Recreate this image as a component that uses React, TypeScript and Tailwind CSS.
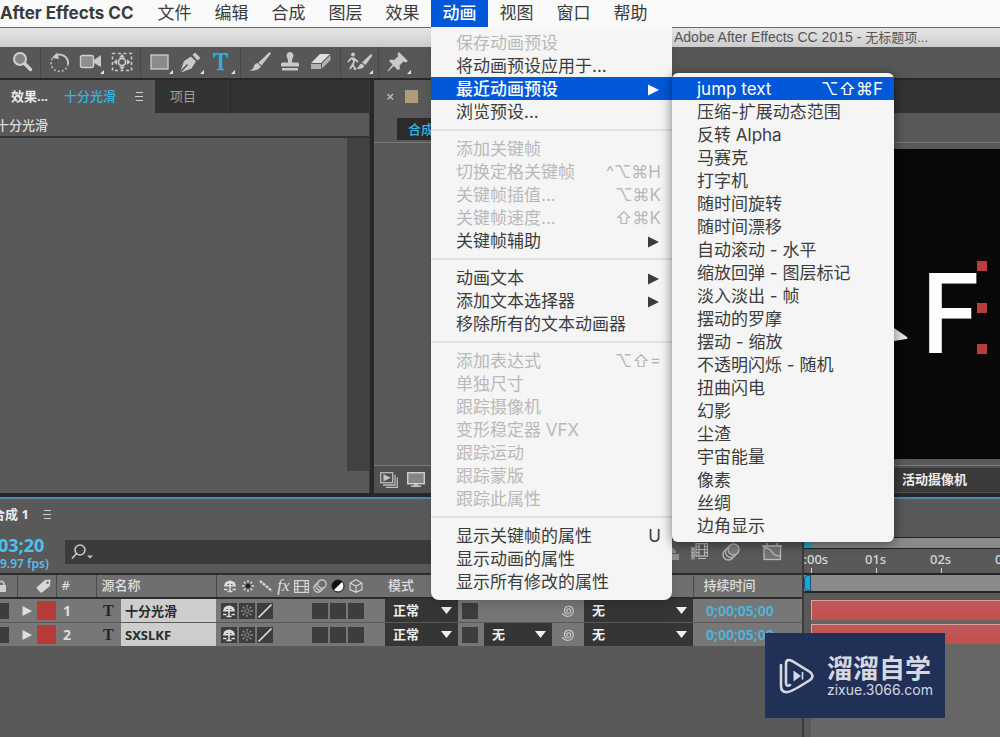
import React from "react";
import clsx from "clsx";

type MenuEntry = {
  label?: string;
  keys?: string;
  disabled?: boolean;
  sub?: boolean;
  active?: boolean;
  separator?: boolean;
};

const menuTitles = ["文件", "编辑", "合成", "图层", "效果", "动画", "视图", "窗口", "帮助"];

const animationMenu: MenuEntry[] = [
  { label: "保存动画预设", disabled: true },
  { label: "将动画预设应用于..." },
  { label: "最近动画预设", sub: true, active: true },
  { label: "浏览预设..." },
  { separator: true },
  { label: "添加关键帧", disabled: true },
  { label: "切换定格关键帧", keys: "^⌥⌘H", disabled: true },
  { label: "关键帧插值...", keys: "⌥⌘K", disabled: true },
  { label: "关键帧速度...", keys: "⇧⌘K", disabled: true },
  { label: "关键帧辅助", sub: true },
  { separator: true },
  { label: "动画文本", sub: true },
  { label: "添加文本选择器", sub: true },
  { label: "移除所有的文本动画器" },
  { separator: true },
  { label: "添加表达式", keys: "⌥⇧=", disabled: true },
  { label: "单独尺寸", disabled: true },
  { label: "跟踪摄像机", disabled: true },
  { label: "变形稳定器 VFX", disabled: true },
  { label: "跟踪运动", disabled: true },
  { label: "跟踪蒙版", disabled: true },
  { label: "跟踪此属性", disabled: true },
  { separator: true },
  { label: "显示关键帧的属性", keys: "U" },
  { label: "显示动画的属性" },
  { label: "显示所有修改的属性" },
];

const recentPresets: MenuEntry[] = [
  { label: "jump text", keys: "⌥⇧⌘F", active: true },
  { label: "压缩-扩展动态范围" },
  { label: "反转 Alpha" },
  { label: "马赛克" },
  { label: "打字机" },
  { label: "随时间旋转" },
  { label: "随时间漂移" },
  { label: "自动滚动 - 水平" },
  { label: "缩放回弹 - 图层标记" },
  { label: "淡入淡出 - 帧" },
  { label: "摆动的罗摩" },
  { label: "摆动 - 缩放" },
  { label: "不透明闪烁 - 随机" },
  { label: "扭曲闪电" },
  { label: "幻影" },
  { label: "尘渣" },
  { label: "宇宙能量" },
  { label: "像素" },
  { label: "丝绸" },
  { label: "边角显示" },
];

const layers = [
  { id: 1, name: "十分光滑", matte: false },
  { id: 2, name: "SXSLKF", matte: true },
];

const MenuList = ({ entries }: { entries: MenuEntry[] }) => (
  <ul className="pt-1 pb-[5px]">
    {entries.map((e, i) =>
      e.separator ? (
        <li key={i} className="h-[14px] flex items-center">
          <span className="h-[2px] w-full bg-[#e0e0e0]" />
        </li>
      ) : (
        <li key={i}>
          <button
            disabled={e.disabled}
            className={clsx(
              "w-full h-[23px] pl-[25px] pr-[11px] pt-[2px] flex items-center justify-between text-[17px] leading-[21px] whitespace-nowrap",
              e.active ? "bg-[#0058d8] text-white" : e.disabled ? "text-[#b9b9b9]" : "text-[#3c3c3c]",
              e.active && e.sub && "font-medium"
            )}
          >
            <span>{e.label}</span>
            {e.keys && <span className="font-normal">{e.keys}</span>}
            {e.sub && (
              <svg width="12" height="12" viewBox="0 0 12 12" fill="currentColor" className="mr-[2px]">
                <path d="M1 0.5L12 6L1 11.5Z" />
              </svg>
            )}
          </button>
        </li>
      )
    )}
  </ul>
);

/* ---------- toolbar ---------- */

const Tool = ({ label, more, children }: { label: string; more?: boolean; children: React.ReactNode }) => (
  <button aria-label={label} className="w-[31px] h-full flex items-center justify-center">
    <svg width="28" height="26" viewBox="0 0 28 26" fill="#c9c9c9" stroke="none">
      {children}
      {more && <path d="M27 20V24H23Z" fill="#e6e6e6" />}
    </svg>
  </button>
);

const ToolGroup = ({ children }: { children: React.ReactNode }) => (
  <div className="h-full px-[3px] flex items-center border-l border-[#484848]">{children}</div>
);

const Toolbar = () => (
  <div className="h-[33px] bg-[#575757] border-b-2 border-[#282828] flex items-center">
    <div className="w-10 h-full pl-[7px] flex items-center">
      <Tool label="缩放工具">
        <circle cx="11" cy="9" r="6" fill="#858585" stroke="#d0d0d0" strokeWidth="2" />
        <path d="M15.5 13.5L21.5 19.5" stroke="#d0d0d0" strokeWidth="3.5" strokeLinecap="round" />
      </Tool>
    </div>
    <ToolGroup>
      <Tool label="旋转工具">
        <path d="M9 6A8.5 8.5 0 0 1 22 14" fill="none" stroke="#c9c9c9" strokeWidth="2" />
        <path d="M22 14A8.5 8.5 0 1 1 8 6.5" fill="none" stroke="#bdbdbd" strokeWidth="1.6" strokeDasharray="2 2" />
        <path d="M6 8L11 2.5L13 9Z" />
      </Tool>
      <Tool label="摄像机工具" more>
        <rect x="3.5" y="5.5" width="13" height="12" rx="2" fill="#8f8f8f" stroke="#cfcfcf" strokeWidth="1.4" />
        <path d="M17 10L24 5V17L17 13Z" />
      </Tool>
      <Tool label="锚点工具">
        <rect x="4.5" y="3.5" width="19" height="17" fill="none" stroke="#c9c9c9" strokeWidth="1.6" strokeDasharray="3 2.5" />
        <circle cx="14" cy="12" r="3.6" fill="none" stroke="#d4d4d4" strokeWidth="1.6" />
        <path d="M14 4L17 7.5H11ZM14 20L17 16.5H11ZM5.5 12L9 9V15ZM22.5 12L19 9V15Z" />
      </Tool>
    </ToolGroup>
    <ToolGroup>
      <Tool label="矩形工具" more>
        <rect x="5" y="5" width="17" height="14" fill="#8b8b8b" stroke="#cecece" strokeWidth="1.3" />
      </Tool>
      <Tool label="钢笔工具" more>
        <path d="M3 22L7 11L14 6.5L19 11.5L14.5 18.5L4 22.5L11 15L10 14L3 21Z" />
        <path d="M15.5 5L18 2.5L23.5 8L20.5 10.5Z" />
      </Tool>
      <Tool label="文字工具" more>
        <path d="M5 3H20V8H18.8Q18.3 4.8 15.5 4.8H14.2V17.5Q14.2 19 16.3 19.2V20.3H8.7V19.2Q10.8 19 10.8 17.5V4.8H9.5Q6.7 4.8 6.2 8H5Z" fill="#36a9d6" />
      </Tool>
    </ToolGroup>
    <ToolGroup>
      <Tool label="画笔工具">
        <path d="M23.5 2L25 3.5L15.5 15.5L12.3 12.7Z" />
        <path d="M11.5 13L15 16.5Q12 21.5 3.5 20.5Q7.5 19.5 8 16Q9 13.2 11.5 13Z" />
      </Tool>
      <Tool label="仿制图章工具">
        <path d="M13 2A3.6 3.6 0 0 1 16 7.5Q14.8 9.5 15 12.5H20.5Q22 12.5 22 14V16.5H4V14Q4 12.5 5.5 12.5H11Q11.2 9.5 10 7.5A3.6 3.6 0 0 1 13 2Z" />
        <rect x="5" y="18" width="16" height="2.5" />
      </Tool>
      <Tool label="橡皮擦工具">
        <path d="M3 13L12 4H22L13 13Z" fill="#dedede" />
        <path d="M3 14H13V19H3ZM14 13.5L22.5 5V10L14 18.5Z" fill="#b2b2b2" />
      </Tool>
    </ToolGroup>
    <ToolGroup>
      <Tool label="Roto 笔刷工具" more>
        <circle cx="7" cy="4.5" r="2" />
        <path d="M6 8L8 11L7 15L9.5 20M7 14L4 19M2 12L5 8.5H8L12 12" fill="none" stroke="#c9c9c9" strokeWidth="1.8" />
        <path d="M25 4L26.500 5.500L19.500 15L16 12.500ZM15.500 13.500L18.500 16Q16 20 9 18.500Q13 17.500 13.500 15Q14.500 13.500 15.500 13.500Z" />
      </Tool>
    </ToolGroup>
    <ToolGroup>
      <Tool label="操控点工具" more>
        <path d="M15 2L24 11L21.5 12.5L19.5 11.5L15.5 15.5L16 19L13.5 20L10 16L4 21.5L3.5 21L8.5 14.5L5 11L6.5 9.5L10 10L14 6.5L13.5 4Z" />
      </Tool>
    </ToolGroup>
  </div>
);

const Burger = () => (
  <svg width="9" height="11" viewBox="0 0 9 11" stroke="#d0d0d0" strokeWidth="1">
    <path d="M1 1.5H8M0 5.5H8M1 9.5H8" />
  </svg>
);

/* ---------- panels ---------- */

const EffectControls = () => (
  <section className="w-[370px] shrink-0 flex flex-col border-r border-[#3a3a3a]">
    <div className="h-[33px] flex bg-[#333333] text-[13px]">
      <div className="w-[155px] pl-[11px] flex items-center bg-[#595959] font-bold text-[#ececec]">
        <span className="w-[53px]">效果...</span>
        <span className="w-[71px] font-medium text-[#36b3e3]">十分光滑</span>
        <Burger />
      </div>
      <button className="w-[76px] pl-[15px] text-left text-[#a0a0a0] border-r border-[#272727]">项目</button>
    </div>
    <div className="h-[25px] pt-[2px] flex items-center border-b-2 border-[#333333] overflow-hidden text-[13px] font-medium text-[#dcdcdc]">
      <span className="-ml-1">十分光滑</span>
    </div>
    <div className="flex-1 flex justify-end pb-[22px]">
      <div className="w-[22px] bg-[#424242]" />
    </div>
  </section>
);

const Composition = () => (
  <section className="flex-1 min-w-0 flex flex-col">
    <div className="h-[33px] flex items-center bg-[#333333]">
      <div className="h-full w-[300px] pl-3 flex items-center gap-[10px] bg-[#595959]">
        <button aria-label="关闭" className="w-[9px] h-[9px]">
          <svg width="9" height="9" viewBox="0 0 9 9" stroke="#c4c4c4" strokeWidth="1.2">
            <path d="M1.5 2L7 7.5M7 2L1.5 7.5" />
          </svg>
        </button>
        <span className="w-[13px] h-[13px] bg-[#b09c78]" />
      </div>
    </div>
    <div className="h-[30px] pl-[23px] pt-[3px] border-b border-[#7b7b7b]">
      <button className="h-[22px] px-[11px] bg-[#2c2c2c] text-[13px] leading-4 font-medium text-[#36b3e3]">合成 1</button>
    </div>
    <div className="flex-1 flex pt-[6px] pb-[6px] border-b border-[#7b7b7b]">
      <div className="w-[120px] shrink-0" />
      <div className="relative flex-1 bg-[#080808] overflow-hidden">
        <span className="absolute right-[20px] top-[92px] font-['Noto_Sans_CJK_SC'] font-medium text-[108px] leading-[130px] text-white">F</span>
        <svg className="absolute right-[92px] top-[179px]" width="14" height="14" viewBox="0 0 14 14" fill="#e6e6e6">
          <path d="M0 0L13 9Q14 11 12 11L0 13Z" />
        </svg>
        <span className="absolute right-[13px] top-[112px] w-[10px] h-[10px] bg-[#b93d3d]" />
        <span className="absolute right-[13px] top-[154px] w-[10px] h-[10px] bg-[#b93d3d]" />
        <span className="absolute right-[13px] top-[195px] w-[10px] h-[10px] bg-[#b93d3d]" />
      </div>
    </div>
    <div className="h-[27px] pl-[6px] flex items-center gap-[9px] bg-[#505050]">
      <svg width="18" height="16" viewBox="0 0 18 16" fill="none" stroke="#bcbcbc" strokeWidth="1.3">
        <rect x="0.7" y="0.7" width="12" height="10" />
        <path d="M4 3L9.5 5.7L4 8.5Z" fill="#d0d0d0" />
        <path d="M15 3V13H3M17.3 5.5V15.3H6" />
      </svg>
      <svg width="18" height="15" viewBox="0 0 18 15">
        <rect x="0.7" y="0.7" width="16.6" height="11" fill="#858585" stroke="#cfcfcf" strokeWidth="1.4" />
        <path d="M7 12H11V13.5H14V15H4V13.5H7Z" fill="#c4c4c4" />
      </svg>
      <span className="h-6 flex-1 ml-1 flex items-center justify-end bg-[#3a3a3a] pr-[33px] text-[13px] font-bold text-[#eeeeee]">活动摄像机</span>
    </div>
  </section>
);

/* ---------- timeline icons ---------- */

const Shy = () => (
  <svg width="16" height="14" viewBox="0 0 16 14">
    <path d="M2 7.5A6 6 0 0 1 14 7.5Z" fill="#dcdcdc" />
    <path d="M8 6V12.5M2 10.5H5.5M10.5 10.5H14M5.5 12.5H10.5" stroke="#dcdcdc" strokeWidth="1.5" fill="none" />
    <path d="M5.5 5.5H7M9 5.5H10.5" stroke="#555" strokeWidth="1" />
  </svg>
);

const Sun = ({ dim }: { dim?: boolean }) => (
  <svg width="16" height="16" viewBox="0 0 16 16" stroke={dim ? "#8d8d8d" : "#dcdcdc"} strokeWidth="1.3" fill="none">
    <path d="M8 2V4.5M8 11.5V14M2 8H4.5M11.5 8H14M3.8 3.8L5.5 5.5M10.5 10.5L12.2 12.2M3.8 12.2L5.5 10.5M10.5 5.5L12.2 3.8" />
    <circle cx="8" cy="8" r="2" fill={dim ? "none" : "#222"} stroke={dim ? "#8d8d8d" : "#222"} strokeWidth="1" />
  </svg>
);

const Slash = () => (
  <svg width="16" height="16" viewBox="0 0 16 16" stroke="#e4e4e4" strokeWidth="1.6">
    <path d="M1.5 14.5L14.5 1.5" />
  </svg>
);

const Film = () => (
  <svg width="15" height="13" viewBox="0 0 15 13" fill="none" stroke="#d4d4d4" strokeWidth="1.2">
    <rect x="0.6" y="0.6" width="13.8" height="11.8" />
    <path d="M3.8 0.5V12.5M11.2 0.5V12.5M3.8 6.5H11.2M0.5 3.5H3.8M0.5 6.5H3.8M0.5 9.5H3.8M11.2 3.5H14.5M11.2 6.5H14.5M11.2 9.5H14.5" />
  </svg>
);

const Blur = () => (
  <svg width="14" height="14" viewBox="0 0 14 14" fill="none" stroke="#cdcdcd" strokeWidth="1.2">
    <circle cx="5" cy="9" r="4.2" />
    <circle cx="7" cy="7" r="4.2" fill="#6f6f6f" />
    <circle cx="9" cy="5" r="4.2" fill="#6f6f6f" />
  </svg>
);

const headerSwitches = [
  <Shy />,
  <Sun />,
  <svg width="14" height="14" viewBox="0 0 14 14" stroke="#dcdcdc" strokeWidth="2.2">
    <path d="M1 2L13 12" strokeDasharray="2.8 1" />
  </svg>,
  <i className="font-['Liberation_Serif'] font-normal text-[17px] leading-4 text-[#dcdcdc]">fx</i>,
  <Film />,
  <Blur />,
  <svg width="14" height="14" viewBox="0 0 14 14">
    <circle cx="7" cy="7" r="6" fill="#fff" stroke="#111" />
    <path d="M2.7 11.3A6 6 0 0 1 11.3 2.7Z" fill="#111" />
  </svg>,
  <svg width="14" height="14" viewBox="0 0 14 14" fill="none" stroke="#d4d4d4" strokeWidth="1.2">
    <path d="M7 0.8L13 4V10.5L7 13.3L1 10.5V4ZM1 4L7 7L13 4M7 7V13" />
  </svg>,
];

const Box = ({ children }: { children?: React.ReactNode }) => (
  <span className="w-4 h-4 shrink-0 bg-[#3d3d3d] flex items-center justify-center">{children}</span>
);

const Dropdown = ({ label, value }: { label: string; value: string }) => (
  <div className="relative h-[23px] bg-[#353535]">
    <select
      aria-label={label}
      defaultValue={value}
      className="appearance-none block w-full h-full pl-2 text-[13px] font-bold text-[#eeeeee] bg-transparent"
    >
      <option>{value}</option>
    </select>
    <svg className="absolute right-[6px] top-2 pointer-events-none" width="11" height="7" viewBox="0 0 11 7" fill="#f0f0f0">
      <path d="M0 0H11L5.5 7Z" />
    </svg>
  </div>
);

const LayerTable = () => (
  <table className="w-full table-fixed border-collapse text-[13px] text-[#dedede]">
    <colgroup>
      <col className="w-[17px]" />
      <col className="w-[39px]" />
      <col className="w-[40px]" />
      <col className="w-[120px]" />
      <col className="w-[169px]" />
      <col className="w-[73px]" />
      <col className="w-[26px]" />
      <col className="w-[68px]" />
      <col className="w-[32px]" />
      <col className="w-[109px]" />
      <col className="w-[109px]" />
    </colgroup>
    <thead>
      <tr className="h-[24px] bg-[#6f6f6f] border-t-2 border-b-2 border-[#2c2c2c] text-left">
        <th className="p-0">
          <svg width="8" height="12" viewBox="0 0 8 12" fill="#d0d0d0">
            <path d="M0 5H6V12H0Z" />
            <path d="M0 1.5H2Q4 2 4 5" fill="none" stroke="#d0d0d0" strokeWidth="1.5" />
          </svg>
        </th>
        <th className="p-0 pl-[18px] border-l border-[#4b4b4b]">
          <svg width="15" height="14" viewBox="0 0 15 14">
            <path
              fillRule="evenodd"
              d="M14.5 0.5L14 7L6 13.5Q5 14 4 13L0.8 9.5Q0.3 8.5 1 8L9 1ZM11.5 2.5A1.3 1.3 0 1 0 11.5 5.1A1.3 1.3 0 0 0 11.5 2.5Z"
              fill="#d8d8d8"
            />
          </svg>
        </th>
        <th className="p-0 pl-[5px] font-medium border-l border-[#4b4b4b]">#</th>
        <th className="p-0 pl-[5px] font-medium border-l border-[#4b4b4b]">源名称</th>
        <th className="p-0 border-l border-[#4b4b4b]">
          <div className="pl-1 flex items-center">
            {headerSwitches.map((icon, i) => (
              <span key={i} className="w-[18px] flex justify-center">{icon}</span>
            ))}
          </div>
        </th>
        <th className="p-0 pl-[3px] font-medium">模式</th>
        <th className="p-0" />
        <th className="p-0" />
        <th className="p-0" />
        <th className="p-0" />
        <th className="p-0 pl-[10px] font-medium border-l border-[#4b4b4b]">持续时间</th>
      </tr>
    </thead>
    <tbody>
      {layers.map((layer) => (
        <tr key={layer.id} className="h-6 bg-[#777777] border-b border-[#595959]">
          <td className="p-0">
            <div className="w-[9px] h-4 bg-[#3d3d3d]" />
          </td>
          <td className="p-0">
            <div className="pl-[5px] flex items-center gap-[5px]">
              <svg width="10" height="10" viewBox="0 0 10 10" fill="#dedede">
                <path d="M0.5 0L10 5L0.5 10Z" />
              </svg>
              <span className="w-[19px] h-[19px] bg-[#b93a3a]" />
            </div>
          </td>
          <td className="p-0 pl-[7px] text-[14px] leading-[20px] font-bold">{layer.id}</td>
          <td className="p-0">
            <div className="h-[23px] pl-[7px] flex items-center">
              <span className="w-[18px] font-['Liberation_Serif'] text-[16px] font-bold text-[#262626]">T</span>
              <span className="flex-1 h-full pl-1 leading-[24px] bg-[#cecece] font-bold text-[#2a2a2a]">{layer.name}</span>
            </div>
          </td>
          <td className="p-0">
            <div className="pl-[5px] flex items-center gap-[2px]">
              <Box><Shy /></Box>
              <Box><Sun dim /></Box>
              <Box><Slash /></Box>
              <span className="w-[35px]" />
              <Box />
              <Box />
              <Box />
            </div>
          </td>
          <td className="p-0">
            <Dropdown label="模式" value="正常" />
          </td>
          <td className="p-0 pl-1">
            <Box />
          </td>
          <td className="p-0">{layer.matte && <Dropdown label="轨道遮罩" value="无" />}</td>
          <td className="p-0 pl-[9px]">
            <svg width="14" height="14" viewBox="0 0 14 14" fill="none" stroke="#cccccc" strokeWidth="1.2">
              <path d="M7 7.5Q5.5 7.5 5.8 6Q6.3 4.5 8 4.8Q10 5.5 9.5 7.8Q8.5 10.3 5.8 9.6Q3 8.5 3.5 5.3Q4.8 1.8 8.5 2.3Q12.5 3.5 12.3 7.5Q11.3 12.3 6.5 12.3Q3 12 1.2 9" />
            </svg>
          </td>
          <td className="p-0">
            <Dropdown label="父级" value="无" />
          </td>
          <td className="p-0 pl-[13px] text-[14px] leading-[20px] font-semibold text-[#4ab9e4]">0;00;05;00</td>
        </tr>
      ))}
    </tbody>
  </table>
);

const Timeline = () => (
  <section className="flex-1 flex flex-col border-t-2 border-[#4b88b5] bg-[#595959]">
    <div className="h-[31px] flex items-center gap-[14px] text-[13px] font-bold text-[#ececec] overflow-hidden">
      <span className="-ml-2">合成 1</span>
      <Burger />
    </div>
    <div className="flex-1 flex">
      <div className="w-[802px] shrink-0">
        <div className="h-[43px] flex items-center">
          <div className="w-[65px] shrink-0 pt-1 overflow-hidden font-bold text-[#4fc1ee]">
            <div className="text-[18px] leading-[20px]">
              <span className="-ml-[2px]">03;20</span>
            </div>
            <div className="text-[12px] leading-[18px] font-semibold">9.97 fps)</div>
          </div>
          <label className="w-[380px] h-6 pl-[6px] flex items-center bg-[#3b3b3b]">
            <svg width="22" height="16" viewBox="0 0 22 16" fill="none" stroke="#c8c8c8" strokeWidth="1.6">
              <circle cx="9" cy="6" r="5" />
              <path d="M5.5 9.5L1 14.5" />
              <path d="M16 11.5H22L19 14.5Z" fill="#c8c8c8" stroke="none" />
            </svg>
            <input type="text" aria-label="搜索" className="flex-1 h-full bg-transparent outline-none text-[13px] text-white" />
          </label>
          <div className="flex-1 pr-5 flex items-center justify-end">
            <svg className="mr-3" width="16" height="16" viewBox="0 0 16 16" fill="#8f8f8f">
              <path d="M0 10H16V16H0ZM3 9A5 5 0 0 1 13 9Z" />
            </svg>
            <svg className="mr-[14px]" width="17" height="17" viewBox="0 0 17 17" fill="none" stroke="#b8b8b8" strokeWidth="1.2">
              <rect x="5" y="0.6" width="11.4" height="12.5" />
              <path d="M8 0.5V13M13.5 0.5V13M8 6.5H13.5M5 3.5H8M5 6.5H8M5 9.5H8M13.5 3.5H16M13.5 6.5H16M13.5 9.5H16M1 4V16.5M3 4V16.5M1 6.5H3M1 9.5H3M1 12.5H3M7 15.5H15" />
            </svg>
            <svg className="mr-[22px]" width="18" height="18" viewBox="0 0 18 18" fill="#595959" stroke="#b8b8b8" strokeWidth="1.4">
              <circle cx="6.5" cy="11.5" r="5.5" />
              <circle cx="9" cy="9" r="5.5" />
              <circle cx="11.5" cy="6.5" r="5.5" fill="#7c7c7c" />
            </svg>
            <svg width="20" height="18" viewBox="0 0 20 18" fill="none" stroke="#b8b8b8" strokeWidth="1.3">
              <rect x="2" y="3" width="16.5" height="13.5" fill="#747474" />
              <path d="M0 3H20M5 0V6M15 0V3M2 5Q8 5 10 9Q12 13 18 13" />
            </svg>
          </div>
        </div>
        <LayerTable />
      </div>

      {/* time ruler and layer bars */}
      <div className="flex-1 min-w-0 flex flex-col overflow-hidden border-l-2 border-[#3c3c3c] mt-[7px]">
        <div className="h-3 flex border-y border-[#252525] bg-[#8a8a8a]">
          <span className="w-[7px] bg-[#22a5d4] rounded-l-sm" />
        </div>
        <div className="h-6 ml-[7px] flex text-[13px] leading-[20px] font-medium text-[#d6d6d6]">
          {["0:00s", "01s", "02s", "03s"].map((t, i) => (
            <div key={t} className="w-[65px] shrink-0 flex flex-col">
              <span className={clsx("h-[19px]", i === 0 ? "-ml-[15px]" : "-ml-[11px]")}>{t}</span>
              <span className="w-px h-[5px] bg-[#d6d6d6]" />
            </div>
          ))}
        </div>
        <div className="h-5 flex border-y-2 border-[#252525] bg-[#8a8a8a]">
          <span className="w-[7px] bg-[#22a5d4] border border-[#0d5a78] rounded-l-sm" />
        </div>
        <div className="flex-1 pt-[7px] pl-[7px]">
          <div className="h-full flex flex-col gap-1 bg-[#666666]">
            {layers.map((layer) => (
              <div key={layer.id} className="h-5 bg-linear-to-b from-[#bd5a5a] to-[#c34e4e] border-t border-l border-[#dda0a0]" />
            ))}
          </div>
        </div>
      </div>
    </div>
  </section>
);

const Watermark = () => (
  <div className="absolute left-[765px] top-[633px] w-[180px] h-[85px] pl-[14px] flex items-center gap-3 bg-[#213056] text-[#d5d8e2]">
    <svg width="36" height="36" viewBox="0 0 36 36" fill="none" stroke="currentColor" strokeWidth="2.6" strokeLinecap="round">
      <path d="M2 7V28Q2 35 9 34Q14 33 31 22Q36 18 31 14L13 3Q7 0 7 6V25Q7 29 11 27" />
      <path d="M14.5 12.5L22 18L14.5 23.5Z" fill="currentColor" stroke="none" />
      <path d="M23.5 14.5V21" strokeWidth="1.6" />
    </svg>
    <div className="whitespace-nowrap">
      <div className="text-[26px] leading-[28px] font-bold">溜溜自学</div>
      <div className="font-[Inter] text-[14px] leading-[14px]">zixue.3066.com</div>
    </div>
  </div>
);

const App = () => {
  return (
    <div className="relative min-h-screen flex flex-col overflow-hidden bg-[#282828] font-['Inter','Noto_Sans_CJK_SC',sans-serif]">
      <nav className="h-[27px] flex items-center bg-[#fafafa] text-[17px] text-[#3a3a3a] whitespace-nowrap">
        <span className="w-[146px] shrink-0 font-bold">After Effects CC</span>
        {menuTitles.map((title) => (
          <button
            key={title}
            className={clsx("w-[57px] h-full shrink-0", title === "动画" && "bg-[#0058d8] text-white font-medium")}
          >
            {title}
          </button>
        ))}
      </nav>
      <div className="h-5 pl-[674px] border-t border-[#6a6a6a] bg-linear-to-b from-[#e6e6e6] to-[#cccccc] font-['Liberation_Sans','Noto_Sans_CJK_SC',sans-serif] text-[14px] leading-[18px] text-[#555555] whitespace-nowrap">
        Adobe After Effects CC 2015 - <span className="text-[13px]">无标题项...</span>
      </div>
      <Toolbar />
      <main className="flex-1 flex flex-col font-['Noto_Sans','Noto_Sans_CJK_SC',sans-serif]">
        <div className="min-h-[413px] mb-1 flex gap-1 *:bg-[#595959]">
          <EffectControls />
          <Composition />
        </div>
        <Timeline />
      </main>

      <div className="absolute left-[431px] top-[27px] w-[241px] pb-[2px] rounded-b-lg bg-[#f5f5f5] shadow-lg">
        <MenuList entries={animationMenu} />
      </div>
      <div className="absolute left-[672px] top-[73px] w-[222px] rounded-md bg-[#f5f5f5] shadow-[0_2px_12px_rgba(0,0,0,0.5)]">
        <MenuList entries={recentPresets} />
      </div>
      <Watermark />
    </div>
  );
};

export default App;
